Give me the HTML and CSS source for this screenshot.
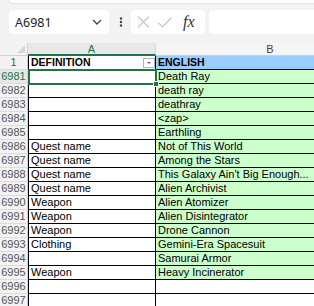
FILE: index.html
```html
<!DOCTYPE html>
<html lang="en">
<head>
    <meta charset="UTF-8">
    <title>Sheet</title>
    <link rel="stylesheet" href="styles.css">
</head>
<body>
    <!-- formula bar -->
    <div class="formula-bar">
        <div class="ribbon-edge"></div>
        <div class="bar-row">
            <div class="name-box">
                <span>A6981</span>
                <svg width="10" height="6" viewBox="0 0 10 6"><polyline points="1,1 5,5 9,1" fill="none" stroke="#444" stroke-width="1.3"/></svg>
            </div>
            <svg class="dots" width="4" height="10" viewBox="0 0 4 10">
                <circle cx="2" cy="1.5" r="1.2" fill="#444"/>
                <circle cx="2" cy="5" r="1.2" fill="#444"/>
                <circle cx="2" cy="8.5" r="1.2" fill="#444"/>
            </svg>
            <div class="fx-buttons">
                <svg class="btn-cancel" width="13" height="12" viewBox="0 0 13 12"><path d="M1 0.5 L12 11.5 M12 0.5 L1 11.5" stroke="#c6c6c6" stroke-width="1.2"/></svg>
                <svg class="btn-enter" width="14" height="11" viewBox="0 0 14 11"><polyline points="0.5,6 4.5,10 13.5,0.5" fill="none" stroke="#c6c6c6" stroke-width="1.2"/></svg>
                <span class="fx">fx</span>
            </div>
            <div class="formula-input"></div>
        </div>
    </div>

    <!-- grid -->
    <div class="sheet">
        <div class="corner"></div>
        <div class="colhead sel">A</div>
        <div class="colhead wide">B</div>

        <div class="rh">1</div>
        <div class="ca head">DEFINITION<span class="filter-btn"></span></div>
        <div class="cb head">ENGLISH</div>

        <div class="rh sel">6981</div>
        <div class="ca active"><span class="fill-handle"></span></div>
        <div class="cb fill">Death Ray</div>

        <div class="rh">6982</div>
        <div class="ca"></div>
        <div class="cb fill">death ray</div>

        <div class="rh">6983</div>
        <div class="ca"></div>
        <div class="cb fill">deathray</div>

        <div class="rh">6984</div>
        <div class="ca"></div>
        <div class="cb fill">&lt;zap&gt;</div>

        <div class="rh">6985</div>
        <div class="ca"></div>
        <div class="cb fill">Earthling</div>

        <div class="rh">6986</div>
        <div class="ca">Quest name</div>
        <div class="cb fill">Not of This World</div>

        <div class="rh">6987</div>
        <div class="ca">Quest name</div>
        <div class="cb fill">Among the Stars</div>

        <div class="rh">6988</div>
        <div class="ca">Quest name</div>
        <div class="cb fill">This Galaxy Ain't Big Enough...</div>

        <div class="rh">6989</div>
        <div class="ca">Quest name</div>
        <div class="cb fill">Alien Archivist</div>

        <div class="rh">6990</div>
        <div class="ca">Weapon</div>
        <div class="cb fill">Alien Atomizer</div>

        <div class="rh">6991</div>
        <div class="ca">Weapon</div>
        <div class="cb fill">Alien Disintegrator</div>

        <div class="rh">6992</div>
        <div class="ca">Weapon</div>
        <div class="cb fill">Drone Cannon</div>

        <div class="rh">6993</div>
        <div class="ca">Clothing</div>
        <div class="cb fill">Gemini-Era Spacesuit</div>

        <div class="rh">6994</div>
        <div class="ca"></div>
        <div class="cb fill">Samurai Armor</div>

        <div class="rh">6995</div>
        <div class="ca">Weapon</div>
        <div class="cb fill">Heavy Incinerator</div>

        <div class="rh">6996</div>
        <div class="ca"></div>
        <div class="cb"></div>

        <div class="rh">6997</div>
        <div class="ca"></div>
        <div class="cb"></div>
    </div>
</body>
</html>
```

FILE: styles.css
```css
/* base */
body {
    margin: 0;
    width: 314px;
    height: 306px;
    overflow: hidden;
    background-color: #fff;
    font-family: "Liberation Sans", Arial, sans-serif;
}

/* formula bar */
.formula-bar {
    height: 43px;
    background-color: #f3f3f3;
    overflow: hidden;
}
.ribbon-edge {
    height: 3px;
    margin-left: 8px;
    background-color: #fff;
    border: 1px solid #e3e3e3;
    border-top: none;
    border-right: none;
    border-radius: 0 0 0 6px;
}
.bar-row {
    display: flex;
    align-items: center;
    margin-top: 6px;
}
.name-box {
    display: flex;
    align-items: center;
    justify-content: space-between;
    box-sizing: border-box;
    width: 100px;
    height: 24px;
    margin-left: 9px;
    padding: 0 7px 0 6px;
    background-color: #fff;
    border-radius: 4px;
    font-family: "Noto Sans", sans-serif;
    font-size: 12.5px;
    color: #222;
}
.dots {
    margin-left: 10px;
}
.fx-buttons {
    display: flex;
    align-items: center;
    box-sizing: border-box;
    width: 74px;
    height: 24px;
    margin-left: 8px;
    padding-left: 6px;
    background-color: #fff;
    border-radius: 4px;
}
.btn-enter {
    margin-left: 8px;
}
.fx {
    margin-left: 11px;
    font-family: "Liberation Serif", serif;
    font-style: italic;
    font-size: 16px;
    color: #333;
}
.formula-input {
    flex: 1;
    height: 24px;
    margin-left: 4px;
    background-color: #fff;
    border-radius: 4px 0 0 4px;
}

/* grid */
.sheet {
    display: grid;
    grid-template-columns: 28px 128px 1fr;
    grid-template-rows: 13px;
    grid-auto-rows: 14px;
    font-size: 11px;
    line-height: 13px;
}
.sheet > div {
    box-sizing: border-box;
    white-space: nowrap;
    overflow: hidden;
}
.corner {
    position: relative;
    background-color: #f3f3f3;
    border-right: 1px solid #d0d0d0;
    border-bottom: 1px solid #d0d0d0;
}
.corner::after {
    content: "";
    position: absolute;
    right: 2px;
    bottom: 2px;
    border-left: 8px solid transparent;
    border-bottom: 8px solid #d6d6d6;
}
.colhead {
    background-color: #f5f5f5;
    border-bottom: 1px solid #d0d0d0;
    border-right: 1px solid #dadada;
    text-align: center;
    color: #444;
    line-height: 12px;
}
/* column B is wider than the window; its label sits at its true centre */
.colhead.wide {
    padding-left: 70px;
    border-right: none;
}
.colhead.sel {
    background-color: #e8e8e8;
    color: #217346;
    border-bottom: 2px solid #217346;
}
.rh {
    background-color: #f3f3f3;
    border-right: 1px solid #d0d0d0;
    border-bottom: 1px solid #dcdcdc;
    text-align: center;
    color: #555;
}
.rh.sel {
    background-color: #e6e8e6;
    color: #217346;
}
.ca {
    background-color: #fff;
    border-left: 1px solid #000;
    border-right: 1px solid #000;
    border-bottom: 1px solid #000;
    padding-left: 2px;
}
.cb {
    background-color: #fff;
    border-bottom: 1px solid #000;
    padding-left: 2px;
}
.cb.fill {
    background-color: #ccffcc;
}
.head {
    font-weight: bold;
    font-size: 10.5px;
}
.ca.head {
    position: relative;
}
.cb.head {
    background-color: #99ccff;
}
.filter-btn {
    position: absolute;
    right: 0;
    top: 2px;
    box-sizing: border-box;
    width: 12px;
    height: 10px;
    background-color: #fff;
    border: 1px solid #b4b4b4;
}
.filter-btn::after {
    content: "";
    position: absolute;
    left: 3px;
    top: 3px;
    border-left: 2.5px solid transparent;
    border-right: 2.5px solid transparent;
    border-top: 2px solid #666;
}

/* selected cell */
.ca.active {
    position: relative;
    overflow: visible !important;
}
.ca.active::after {
    content: "";
    position: absolute;
    left: -1px;
    top: -1px;
    right: -2px;
    bottom: -2px;
    border: 2px solid #217346;
}
.fill-handle {
    position: absolute;
    right: -4px;
    bottom: -4px;
    width: 4px;
    height: 4px;
    background-color: #217346;
    border: 1px solid #fff;
    z-index: 2;
}
```
